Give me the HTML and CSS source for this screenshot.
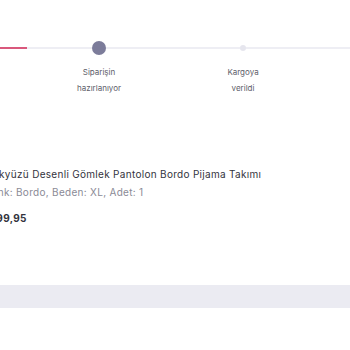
FILE: index.html
```html
<!DOCTYPE html>
<html lang="tr">
<head>
    <meta charset="UTF-8">
    <meta name="viewport" content="width=device-width, initial-scale=1.0">
    <title>Sipariş Detayı</title>
    <link rel="stylesheet" href="styles.css">
</head>
<body>
    <div class="tracker">
        <div class="step done">
            <div class="track"><span class="line"></span><span class="dot"></span><span class="line"></span></div>
        </div>
        <div class="step current">
            <div class="track"><span class="line"></span><span class="dot"></span><span class="line"></span></div>
            <div class="label">Siparişin<br>hazırlanıyor</div>
        </div>
        <div class="step last">
            <div class="track"><span class="line"></span><span class="dot"></span><span class="line"></span></div>
            <div class="label">Kargoya<br>verildi</div>
        </div>
    </div>

    <div class="product">
        <p class="product-name">Gökyüzü Desenli Gömlek Pantolon Bordo Pijama Takımı</p>
        <p class="product-meta">Renk: Bordo, Beden: XL, Adet: 1</p>
        <p class="product-price">₺199,95</p>
    </div>

    <div class="divider"></div>
</body>
</html>
```

FILE: styles.css
```css
body {
    margin: 0;
    background-color: #fff;
    font-family: Inter, "Open Sans", sans-serif;
    overflow: hidden;
}
.tracker {
    display: flex;
    margin-left: -117px;
    padding-top: 41px;
}
.step {
    flex: 0 0 144px;
    display: flex;
    flex-direction: column;
    align-items: center;
}
.step.last {
    flex: 0 0 179px;
    align-items: flex-start;
}
.step.last .label {
    width: 144px;
}
.track {
    width: 100%;
    height: 14px;
    display: flex;
    align-items: center;
}
.line {
    flex: 1;
    height: 2px;
    background-color: #eeeef4;
}
.last .line:first-child {
    flex: 0 0 69px;
}
.dot {
    width: 6px;
    height: 6px;
    border-radius: 50%;
    background-color: #e6e6ee;
}
.done .line,
.done .dot {
    background-color: #d9587c;
}
.current .dot {
    width: 14px;
    height: 14px;
    background-color: #7c7c9a;
}
.label {
    margin-top: 9px;
    font-size: 8px;
    line-height: 16px;
    color: #60606a;
    text-align: center;
}
.product {
    margin-left: -15px;
    padding-top: 69px;
}
.product p {
    margin: 0;
    white-space: nowrap;
    font-size: 10px;
    line-height: 18px;
    letter-spacing: 0.3px;
}
.product-name {
    color: #33333d;
}
.product-meta {
    color: #8a8a96;
}
.product .product-price {
    margin-top: 8px;
    font-weight: 700;
    color: #33333d;
}
.divider {
    margin-top: 58px;
    height: 23px;
    background-color: #ebebf2;
}
```
